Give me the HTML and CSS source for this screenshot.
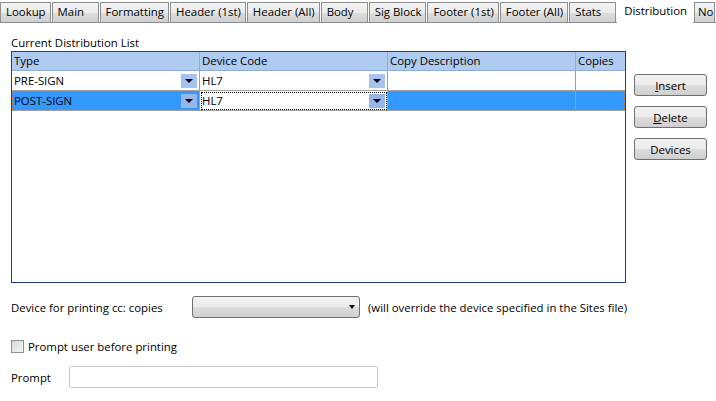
FILE: index.html
```html
<!DOCTYPE html>
<html lang="en">
<head>
  <meta charset="UTF-8" />
  <title>Distribution</title>
  <link rel="stylesheet" href="styles.css">
</head>
<body>
  <!-- Tab strip -->
  <div class="tabs">
    <div class="tab">Lookup</div>
    <div class="tab">Main</div>
    <div class="tab">Formatting</div>
    <div class="tab">Header (1st)</div>
    <div class="tab">Header (All)</div>
    <div class="tab">Body</div>
    <div class="tab">Sig Block</div>
    <div class="tab">Footer (1st)</div>
    <div class="tab">Footer (All)</div>
    <div class="tab">Stats</div>
    <div class="tab active">Distribution</div>
    <div class="tab cut">No</div>
  </div>

  <div class="panel">
    <div class="caption">Current Distribution List</div>

    <div class="list-area">
      <div class="grid">
        <div class="grid-head">
          <div class="cell">Type</div>
          <div class="cell">Device Code</div>
          <div class="cell">Copy Description</div>
          <div class="cell">Copies</div>
        </div>

        <div class="grid-row">
          <div class="cell combo">PRE-SIGN<span class="drop"></span></div>
          <div class="cell combo">HL7<span class="drop"></span></div>
          <div class="cell"></div>
          <div class="cell"></div>
        </div>

        <div class="grid-row selected">
          <div class="cell combo">POST-SIGN<span class="drop"></span></div>
          <div class="cell combo focus">HL7<span class="drop"></span></div>
          <div class="cell"></div>
          <div class="cell"></div>
        </div>
      </div>

      <div class="side-buttons">
        <button class="btn"><u>I</u>nsert</button>
        <button class="btn"><u>D</u>elete</button>
        <button class="btn">Devices</button>
      </div>
    </div>

    <div class="field device-row">
      <span class="field-label">Device for printing cc: copies</span>
      <div class="select"><span class="arrow"></span></div>
      <span class="hint">(will override the device specified in the Sites file)</span>
    </div>

    <label class="check-row">
      <span class="checkbox"></span>
      Prompt user before printing
    </label>

    <div class="field prompt-row">
      <span class="field-label short">Prompt</span>
      <div class="textbox"></div>
    </div>
  </div>
</body>
</html>
```

FILE: styles.css
```css
body {
  margin: 0;
  font-family: 'Open Sans', 'Noto Sans', sans-serif;
  font-size: 11.4px;
  color: #000;
  background: #fff;
  overflow: hidden;
}

/* tabs */
.tabs {
  display: flex;
  height: 22px;
  align-items: flex-end;
  border-bottom: 1px solid #898c95;
  white-space: nowrap;
}
.tab {
  box-sizing: border-box;
  min-width: 47px;
  height: 20px;
  line-height: 18px;
  padding: 0 4px 0 5px;
  margin-right: 1px;
  border: 1px solid #8e8f8f;
  border-bottom: none;
  background: linear-gradient(#f3f3f3 0%, #ebebeb 50%, #dddddd 51%, #cfcfcf 100%);
}
.tab.active {
  flex-shrink: 0;
  height: 23px;
  margin-bottom: -1px;
  background: #fff;
  border-color: #fff;
  padding: 0 5px 0 6px;
  line-height: 19px;
}
.tab.cut {
  flex: 1;
  min-width: 0;
  overflow: hidden;
  padding-left: 3px;
}

/* panel */
.panel {
  padding: 12px 0 0 11px;
}
.caption {
  line-height: 16px;
  height: 16px;
}

.list-area {
  display: flex;
  align-items: flex-start;
}
.grid {
  width: 613px;
  height: 230px;
  border: 1px solid #1b3c8f;
  background: #fff;
}
.grid-head,
.grid-row {
  display: grid;
  grid-template-columns: 188px 188px 188px 1fr;
}
.grid-head {
  height: 18px;
  background: #afcbf0;
  border-bottom: 1px solid #8cacdc;
}
.grid-head .cell {
  line-height: 18px;
  padding-left: 2px;
  border-right: 1px solid #8cacdc;
}
.grid-head .cell:last-child { border-right: none; }

.grid-row {
  height: 20px;
}
.grid-row .cell {
  position: relative;
  line-height: 19px;
  padding-left: 2px;
  border-right: 1px solid #a0a0a0;
  border-bottom: 1px solid #a0a0a0;
}
.grid-row .cell:last-child { border-right: none; }

.grid-row.selected {
  background: #3399ff;
  outline: 1px dashed #c87a3a;
  outline-offset: -1px;
}
.grid-row.selected .cell.focus {
  background: #fff;
  outline: 1px dotted #000;
  outline-offset: -2px;
}

.drop {
  position: absolute;
  right: 2px;
  top: 3px;
  width: 16px;
  height: 14px;
  background: #a6c2f0;
}
.drop::after {
  content: "";
  position: absolute;
  left: 4px;
  top: 5px;
  border-left: 4px solid transparent;
  border-right: 4px solid transparent;
  border-top: 4px solid #000;
}
.selected .drop { background: #96b6ea; }

.side-buttons {
  display: flex;
  flex-direction: column;
  gap: 10px;
  margin: 23px 0 0 8px;
}
.btn {
  width: 73px;
  height: 22px;
  padding: 0;
  font-family: inherit;
  font-size: 11.4px;
  color: #000;
  border: 1px solid #707070;
  border-radius: 3px;
  background: linear-gradient(#f2f2f2 0%, #ebebeb 50%, #dddddd 51%, #cfcfcf 100%);
}

/* lower fields */
.field {
  display: flex;
  align-items: center;
}
.device-row {
  margin-top: 13px;
  height: 22px;
}
.field-label {
  width: 181px;
}
.field-label.short {
  width: 58px;
}
.select {
  position: relative;
  width: 166px;
  height: 20px;
  border: 1px solid #707070;
  border-radius: 3px;
  background: linear-gradient(#f2f2f2 0%, #ebebeb 50%, #dddddd 51%, #cfcfcf 100%);
}
.arrow {
  position: absolute;
  right: 4px;
  top: 8px;
  border-left: 3px solid transparent;
  border-right: 3px solid transparent;
  border-top: 4px solid #000;
}
.hint {
  margin-left: 8px;
}

.check-row {
  display: flex;
  align-items: center;
  gap: 4px;
  margin-top: 20px;
  height: 16px;
}
.checkbox {
  width: 11px;
  height: 11px;
  border: 1px solid #8e8f8f;
  background: linear-gradient(135deg, #d8d8d8, #f6f6f6);
}

.prompt-row {
  margin-top: 12px;
  height: 22px;
}
.textbox {
  width: 307px;
  height: 20px;
  border: 1px solid #c8c8c8;
  border-radius: 2px;
  background: #fff;
}
```
